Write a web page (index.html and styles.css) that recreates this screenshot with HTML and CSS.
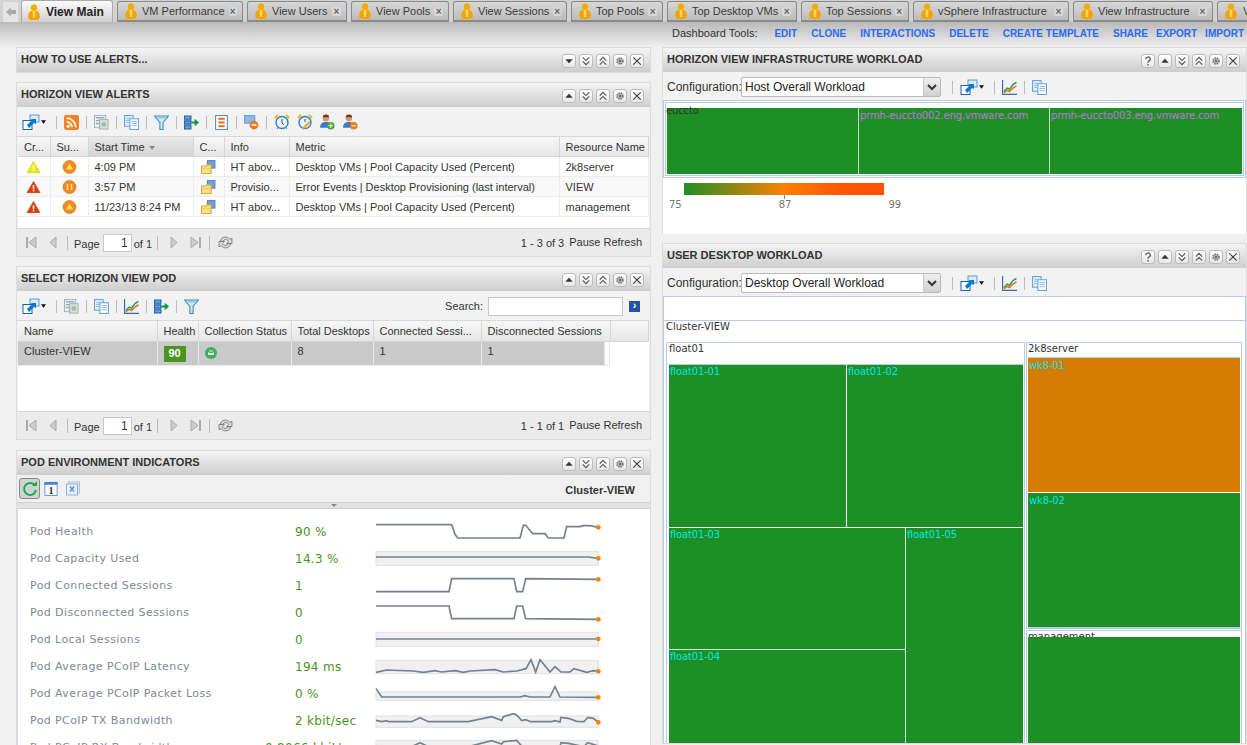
FILE: index.html
```html
<!DOCTYPE html>
<html lang="en">
<head>
    <meta charset="UTF-8">
    <title>View Main</title>
    <link rel="stylesheet" href="styles.css">
</head>
<body>

    <svg class="sprites" width="0" height="0">
        <defs>
            <symbol id="i-person" viewBox="0 0 12 16">
                <circle cx="6" cy="3.800" r="3.300" fill="#f5ad00"/>
                <path d="M6 0l1 1.500H5z" fill="#f5ad00"/>
                <path d="M.5 14.500c-1-4 1-7.500 3-7.500h5c2 0 4 3.500 3 7.500l-2 1.500H2.500z" fill="#f4a300"/>
                <path d="M4.500 7h3L7 14H5z" fill="#ffd766"/>
            </symbol>
            <symbol id="i-launch" viewBox="0 0 18 16">
                <rect x="8" y="1" width="9" height="7" fill="#dbe9f8" stroke="#5b9bd5"/>
                <rect x="1" y="6.500" width="9" height="9" fill="#fff" stroke="#1c5fa8"/>
                <path d="M5 11l5-5-2-1h6v5l-2-1-5 5z" fill="#0a78d8"/>
            </symbol>
            <symbol id="i-caret" viewBox="0 0 6 4"><path d="M0 0h6L3 4z" fill="#111"/></symbol>
            <symbol id="i-rss" viewBox="0 0 14 14">
                <rect width="14" height="14" rx="2" fill="#f58220"/>
                <circle cx="4" cy="10.500" r="1.500" fill="#fff"/>
                <path d="M2.500 6.500a5 5 0 0 1 5 5M2.500 3a8.500 8.500 0 0 1 8.500 8.500" fill="none" stroke="#fff" stroke-width="1.600"/>
            </symbol>
            <symbol id="i-config" viewBox="0 0 16 16">
                <rect x=".5" y=".5" width="12" height="13" fill="#eef3f8" stroke="#8fb4d8"/>
                <path d="M2 3h9M2 6h4M2 9h4" stroke="#9aa" stroke-width="1.500"/>
                <rect x="6" y="5" width="9" height="10" fill="#ddd" stroke="#aaa"/>
                <circle cx="10.500" cy="10" r="2.500" fill="#8fc79a"/>
            </symbol>
            <symbol id="i-copy" viewBox="0 0 14 14">
                <rect x=".5" y=".5" width="8" height="10" fill="#e6f0fb" stroke="#6aa3e0"/>
                <rect x="5.500" y="3.500" width="8" height="10" fill="#fff" stroke="#6aa3e0"/>
                <path d="M7 6h5M7 8h5M7 10h5M2 3h5M2 5h3M2 7h3" stroke="#8fbbe8"/>
            </symbol>
            <symbol id="i-filter" viewBox="0 0 14 14">
                <path d="M.5 1h13L8.500 7v6.500h-3V7z" fill="#cfe6f7" stroke="#3c8fc0"/>
                <path d="M3 2.500h8" stroke="#7fbfe0"/>
            </symbol>
            <symbol id="i-export" viewBox="0 0 14 14">
                <path d="M.5 1h6v3h-6zM.5 5.500h6v3h-6zM.5 10h6v3h-6z" fill="#6aa3e0" stroke="#1c5fa8"/>
                <path d="M7 6h3V3.500L14 7l-4 3.500V8H7z" fill="#0a9a3c"/>
            </symbol>
            <symbol id="i-list" viewBox="0 0 12 14">
                <rect x=".5" y=".5" width="11" height="13" fill="#fff" stroke="#4a8ed0"/>
                <path d="M3 3.500h6M3 7h6M3 10.500h6" stroke="#f26a1b" stroke-width="1.800"/>
            </symbol>
            <symbol id="i-minus" viewBox="0 0 12 12">
                <rect x=".5" y=".5" width="8" height="6" fill="#8fb8e8" stroke="#6aa3e0"/>
                <circle cx="8" cy="8" r="3.500" fill="#f07a1a"/>
                <path d="M6 8h4" stroke="#fff" stroke-width="1.200"/>
            </symbol>
            <symbol id="i-alarm" viewBox="0 0 16 16">
                <path d="M1 4l3-3M15 4l-3-3" stroke="#f2b400" stroke-width="2"/>
                <circle cx="8" cy="8.500" r="6" fill="#eaf4fc" stroke="#2f80c8" stroke-width="1.400"/>
                <path d="M8 5v4l2 2" fill="none" stroke="#444"/>
                <path d="M3 15l1.500-2M13 15l-1.500-2" stroke="#777"/>
            </symbol>
            <symbol id="i-alarm-edit" viewBox="0 0 16 16">
                <path d="M1 4l3-3M15 4l-3-3" stroke="#f2b400" stroke-width="2"/>
                <circle cx="8" cy="8.500" r="6" fill="#eaf4fc" stroke="#2f80c8" stroke-width="1.400"/>
                <path d="M8 5v3" stroke="#444"/>
                <path d="M5 14l7-7 1.500 1.500-7 7H5z" fill="#f2a030"/>
            </symbol>
            <symbol id="i-user-add" viewBox="0 0 15 15">
                <circle cx="6.500" cy="4" r="3" fill="#d49a6a"/>
                <path d="M3.500 3a3 2.500 0 0 1 6 0z" fill="#6b3d1c"/>
                <path d="M1 13c0-4 2-5.500 5.500-5.500S11 9 11 13z" fill="#3f78c8"/>
                <circle cx="11" cy="11" r="3.500" fill="#46a83c"/>
                <path d="M9 11h4M11 9v4" stroke="#fff"/>
            </symbol>
            <symbol id="i-user-del" viewBox="0 0 15 15">
                <circle cx="6.500" cy="4" r="3" fill="#d49a6a"/>
                <path d="M3.500 3a3 2.500 0 0 1 6 0z" fill="#6b3d1c"/>
                <path d="M1 13c0-4 2-5.500 5.500-5.500S11 9 11 13z" fill="#3f78c8"/>
                <circle cx="11" cy="11" r="3.500" fill="#f07a1a"/>
                <path d="M9 11h4" stroke="#fff"/>
            </symbol>
            <symbol id="i-chart" viewBox="0 0 13 13">
                <path d="M.5 0v12.500H13" fill="none" stroke="#2f6fb0"/>
                <path d="M1.500 10l3-3 2 1 3-4 3-2" fill="none" stroke="#2aa04a" stroke-width="1.300"/>
                <path d="M1.500 11l3-2 2 1 3-3 3-2" fill="none" stroke="#f26a1b" stroke-width="1.300"/>
            </symbol>
            <symbol id="i-warn-y" viewBox="0 0 16 14">
                <path d="M8 1l7 12H1z" fill="#eaea10" stroke="#c8c800" stroke-width=".6"/>
                <path d="M8 5v4M8 10v1.600" stroke="#fff" stroke-width="1.600"/>
            </symbol>
            <symbol id="i-warn-r" viewBox="0 0 16 14">
                <path d="M8 1l7 12H1z" fill="#d9400e" stroke="#c03500" stroke-width=".6"/>
                <path d="M8 5v4M8 10v1.600" stroke="#fff" stroke-width="1.600"/>
            </symbol>
            <symbol id="i-badge" viewBox="0 0 14 14">
                <circle cx="7" cy="7" r="6.500" fill="#f08a1e" stroke="#c96a10" stroke-width=".6"/>
                <path d="M7 3.500l3.500 6h-7z" fill="#ffe25c"/>
            </symbol>
            <symbol id="i-badge-n" viewBox="0 0 14 14">
                <circle cx="7" cy="7" r="6.500" fill="#f08a1e" stroke="#c96a10" stroke-width=".6"/>
                <path d="M5 4v6M9 4v6" stroke="#ffe0b0" stroke-width="1.400"/>
            </symbol>
            <symbol id="i-folder" viewBox="0 0 14 13">
                <rect x="6" y=".5" width="7" height="7" fill="#6f9fe0" stroke="#5a88c8"/>
                <path d="M.5 5.500h4l1-1h4v8h-9z" fill="#fbe08a" stroke="#d8a838"/>
                <path d="M1 8h8" stroke="#f5c850"/>
            </symbol>
            <symbol id="i-first" viewBox="0 0 11 13"><path d="M1 1v11" stroke="#aaa" stroke-width="2"/><path d="M10 1v11L3 6.500z" fill="#ccc" stroke="#aaa"/></symbol>
            <symbol id="i-prev" viewBox="0 0 8 13"><path d="M7 1v11L1 6.500z" fill="#ccc" stroke="#aaa"/></symbol>
            <symbol id="i-next" viewBox="0 0 8 13"><path d="M1 1v11l6-5.500z" fill="#ccc" stroke="#aaa"/></symbol>
            <symbol id="i-last" viewBox="0 0 11 13"><path d="M10 1v11" stroke="#aaa" stroke-width="2"/><path d="M1 1v11l7-5.500z" fill="#ccc" stroke="#aaa"/></symbol>
            <symbol id="i-reload" viewBox="0 0 14 14">
                <path d="M2 6a5 5 0 0 1 9-2l2-1v5H8l2-2a3 3 0 0 0-5.500 0zM12 8a5 5 0 0 1-9 2l-2 1V6h5L4 8a3 3 0 0 0 5.500 0z" fill="#ddd" stroke="#777" stroke-width=".8"/>
            </symbol>
            <symbol id="b-down" viewBox="0 0 13 13"><path d="M2.500 4.500h8L6.500 9z" fill="#333"/></symbol>
            <symbol id="b-up" viewBox="0 0 13 13"><path d="M2.500 8.500h8L6.500 4z" fill="#333"/></symbol>
            <symbol id="b-dbl-down" viewBox="0 0 13 13"><path d="M3 2.500l3.500 3.500L10 2.500M3 7l3.500 3.500L10 7" fill="none" stroke="#555" stroke-width="1.200"/></symbol>
            <symbol id="b-dbl-up" viewBox="0 0 13 13"><path d="M3 6l3.500-3.500L10 6M3 10.500L6.500 7l3.500 3.500" fill="none" stroke="#555" stroke-width="1.200"/></symbol>
            <symbol id="b-gear" viewBox="0 0 13 13"><circle cx="6.500" cy="6.500" r="3.200" fill="#bbb" stroke="#777" stroke-width="1.800" stroke-dasharray="1.600 1"/><circle cx="6.500" cy="6.500" r="1.300" fill="#666"/></symbol>
            <symbol id="b-close" viewBox="0 0 13 13"><path d="M2.500 2.500l8 8M10.500 2.500l-8 8" stroke="#333" stroke-width="1.100"/></symbol>
            <symbol id="b-help" viewBox="0 0 13 13"><path d="M4 4.500a2.500 2.200 0 1 1 3.500 2c-1 .5-1 1-1 2M6.500 9.800v1.700" fill="none" stroke="#666" stroke-width="1.600"/></symbol>
        </defs>
    </svg>

    <div class="tabbar">
        <div class="tab-back"><svg width="10" height="10" viewBox="0 0 10 10"><path d="M0 5l5-4.500V3h5v4H5v2.500z" fill="#aaa"/></svg></div>
        <div class="tab tab-active w92"><svg class="tab-icon"><use href="#i-person"/></svg><span>View Main</span></div>
        <div class="tab w126"><svg class="tab-icon"><use href="#i-person"/></svg><span>VM Performance</span><i class="tab-x">×</i></div>
        <div class="tab w100"><svg class="tab-icon"><use href="#i-person"/></svg><span>View Users</span><i class="tab-x">×</i></div>
        <div class="tab w98"><svg class="tab-icon"><use href="#i-person"/></svg><span>View Pools</span><i class="tab-x">×</i></div>
        <div class="tab w114"><svg class="tab-icon"><use href="#i-person"/></svg><span>View Sessions</span><i class="tab-x">×</i></div>
        <div class="tab w92"><svg class="tab-icon"><use href="#i-person"/></svg><span>Top Pools</span><i class="tab-x">×</i></div>
        <div class="tab w130"><svg class="tab-icon"><use href="#i-person"/></svg><span>Top Desktop VMs</span><i class="tab-x">×</i></div>
        <div class="tab w108"><svg class="tab-icon"><use href="#i-person"/></svg><span>Top Sessions</span><i class="tab-x">×</i></div>
        <div class="tab w156"><svg class="tab-icon"><use href="#i-person"/></svg><span>vSphere Infrastructure</span><i class="tab-x">×</i></div>
        <div class="tab w140"><svg class="tab-icon"><use href="#i-person"/></svg><span>View Infrastructure</span><i class="tab-x">×</i></div>
        <div class="tab w60"><svg class="tab-icon tab-icon-last"><use href="#i-person"/></svg><span>V</span></div>
    </div>

    <div class="dash-tools">
        <span class="dash-label">Dashboard Tools:</span>
        <a class="dash-link">EDIT</a>
        <a class="dash-link">CLONE</a>
        <a class="dash-link">INTERACTIONS</a>
        <a class="dash-link">DELETE</a>
        <a class="dash-link">CREATE TEMPLATE</a>
        <a class="dash-link">SHARE</a>
        <a class="dash-link tight">EXPORT</a>
        <a class="dash-link tight">IMPORT</a>
    </div>

    <div class="columns">

        <div class="col-left">

            <section class="panel">
                <header class="panel-head">
                    <h3>HOW TO USE ALERTS...</h3>
                    <div class="win-btns">
                        <svg class="win-btn"><use href="#b-down"/></svg>
                        <svg class="win-btn"><use href="#b-dbl-down"/></svg>
                        <svg class="win-btn"><use href="#b-dbl-up"/></svg>
                        <svg class="win-btn"><use href="#b-gear"/></svg>
                        <svg class="win-btn"><use href="#b-close"/></svg>
                    </div>
                </header>
            </section>

            <section class="panel alerts">
                <header class="panel-head">
                    <h3>HORIZON VIEW ALERTS</h3>
                    <div class="win-btns">
                        <svg class="win-btn"><use href="#b-up"/></svg>
                        <svg class="win-btn"><use href="#b-dbl-down"/></svg>
                        <svg class="win-btn"><use href="#b-dbl-up"/></svg>
                        <svg class="win-btn"><use href="#b-gear"/></svg>
                        <svg class="win-btn"><use href="#b-close"/></svg>
                    </div>
                </header>
                <div class="toolbar">
                    <svg class="ic-launch"><use href="#i-launch"/></svg><svg class="ic-caret"><use href="#i-caret"/></svg>
                    <b class="sep"></b>
                    <svg class="ic"><use href="#i-rss"/></svg>
                    <b class="sep"></b>
                    <svg class="ic"><use href="#i-config"/></svg>
                    <b class="sep"></b>
                    <svg class="ic"><use href="#i-copy"/></svg>
                    <b class="sep"></b>
                    <svg class="ic"><use href="#i-filter"/></svg>
                    <b class="sep"></b>
                    <svg class="ic"><use href="#i-export"/></svg>
                    <b class="sep"></b>
                    <svg class="ic"><use href="#i-list"/></svg>
                    <b class="sep"></b>
                    <svg class="ic"><use href="#i-minus"/></svg>
                    <b class="sep"></b>
                    <svg class="ic ic-wide"><use href="#i-alarm"/></svg>
                    <svg class="ic ic-wide"><use href="#i-alarm-edit"/></svg>
                    <svg class="ic ic-wide"><use href="#i-user-add"/></svg>
                    <svg class="ic ic-wide"><use href="#i-user-del"/></svg>
                </div>
                <table class="grid grid-alerts">
                    <colgroup><col class="c32"><col class="c38"><col class="c105"><col class="c31"><col class="c65"><col class="c270"><col></colgroup>
                    <thead>
                        <tr><th>Cr...</th><th>Su...</th><th class="sorted">Start Time <em class="sort-mark"></em></th><th>C...</th><th>Info</th><th>Metric</th><th>Resource Name</th></tr>
                    </thead>
                    <tbody>
                        <tr>
                            <td class="ctr"><svg class="cell-ic"><use href="#i-warn-y"/></svg></td>
                            <td class="ctr"><svg class="cell-ic"><use href="#i-badge"/></svg></td>
                            <td>4:09 PM</td>
                            <td class="ctr"><svg class="cell-ic"><use href="#i-folder"/></svg></td>
                            <td>HT abov...</td>
                            <td>Desktop VMs | Pool Capacity Used (Percent)</td>
                            <td>2k8server</td>
                        </tr>
                        <tr>
                            <td class="ctr"><svg class="cell-ic"><use href="#i-warn-r"/></svg></td>
                            <td class="ctr"><svg class="cell-ic"><use href="#i-badge-n"/></svg></td>
                            <td>3:57 PM</td>
                            <td class="ctr"><svg class="cell-ic"><use href="#i-folder"/></svg></td>
                            <td>Provisio...</td>
                            <td>Error Events | Desktop Provisioning (last interval)</td>
                            <td>VIEW</td>
                        </tr>
                        <tr>
                            <td class="ctr"><svg class="cell-ic"><use href="#i-warn-r"/></svg></td>
                            <td class="ctr"><svg class="cell-ic"><use href="#i-badge"/></svg></td>
                            <td>11/23/13 8:24 PM</td>
                            <td class="ctr"><svg class="cell-ic"><use href="#i-folder"/></svg></td>
                            <td>HT abov...</td>
                            <td>Desktop VMs | Pool Capacity Used (Percent)</td>
                            <td>management</td>
                        </tr>
                    </tbody>
                </table>
                <div class="grid-fill fill-alerts"></div>
                <div class="pager">
                    <svg class="pg-first"><use href="#i-first"/></svg>
                    <svg class="pg-prev"><use href="#i-prev"/></svg>
                    <b class="sep"></b>
                    <span>Page</span><span class="pg-input">1</span><span>of 1</span>
                    <b class="sep"></b>
                    <svg class="pg-next"><use href="#i-next"/></svg>
                    <svg class="pg-last"><use href="#i-last"/></svg>
                    <b class="sep"></b>
                    <svg class="pg-reload"><use href="#i-reload"/></svg>
                    <span class="pg-count">1 - 3 of 3</span>
                    <span class="pg-pause">Pause Refresh</span>
                </div>
            </section>

            <section class="panel pods">
                <header class="panel-head">
                    <h3>SELECT HORIZON VIEW POD</h3>
                    <div class="win-btns">
                        <svg class="win-btn"><use href="#b-up"/></svg>
                        <svg class="win-btn"><use href="#b-dbl-down"/></svg>
                        <svg class="win-btn"><use href="#b-dbl-up"/></svg>
                        <svg class="win-btn"><use href="#b-gear"/></svg>
                        <svg class="win-btn"><use href="#b-close"/></svg>
                    </div>
                </header>
                <div class="toolbar">
                    <svg class="ic-launch"><use href="#i-launch"/></svg><svg class="ic-caret"><use href="#i-caret"/></svg>
                    <b class="sep"></b>
                    <svg class="ic"><use href="#i-config"/></svg>
                    <b class="sep"></b>
                    <svg class="ic"><use href="#i-copy"/></svg>
                    <b class="sep"></b>
                    <svg class="ic"><use href="#i-chart"/></svg>
                    <b class="sep"></b>
                    <svg class="ic"><use href="#i-export"/></svg>
                    <b class="sep"></b>
                    <svg class="ic"><use href="#i-filter"/></svg>
                    <span class="search-label">Search:</span>
                    <span class="search-box"></span>
                    <span class="search-go">›</span>
                </div>
                <table class="grid grid-pods">
                    <colgroup><col class="c139"><col class="c41"><col class="c93"><col class="c82"><col class="c108"><col class="c129"><col></colgroup>
                    <thead>
                        <tr><th>Name</th><th>Health</th><th>Collection Status</th><th>Total Desktops</th><th>Connected Sessi...</th><th>Disconnected Sessions</th><th></th></tr>
                    </thead>
                    <tbody>
                        <tr class="selected">
                            <td>Cluster-VIEW</td>
                            <td><span class="health">90</span></td>
                            <td><svg class="status" viewBox="0 0 12 12"><circle cx="6" cy="6" r="6" fill="#3fae5a"/><path d="M3 8V5l1.500 1h3L9 5v3z" fill="#d8f5dc"/><path d="M5 5V3M7 5V3" stroke="#d8f5dc"/></svg></td>
                            <td>8</td>
                            <td>1</td>
                            <td class="sel-end">1</td>
                            <td class="no-sel"></td>
                        </tr>
                    </tbody>
                </table>
                <div class="grid-fill fill-pods"></div>
                <div class="pager">
                    <svg class="pg-first"><use href="#i-first"/></svg>
                    <svg class="pg-prev"><use href="#i-prev"/></svg>
                    <b class="sep"></b>
                    <span>Page</span><span class="pg-input">1</span><span>of 1</span>
                    <b class="sep"></b>
                    <svg class="pg-next"><use href="#i-next"/></svg>
                    <svg class="pg-last"><use href="#i-last"/></svg>
                    <b class="sep"></b>
                    <svg class="pg-reload"><use href="#i-reload"/></svg>
                    <span class="pg-count">1 - 1 of 1</span>
                    <span class="pg-pause">Pause Refresh</span>
                </div>
            </section>

            <section class="panel env">
                <header class="panel-head">
                    <h3>POD ENVIRONMENT INDICATORS</h3>
                    <div class="win-btns">
                        <svg class="win-btn"><use href="#b-up"/></svg>
                        <svg class="win-btn"><use href="#b-dbl-down"/></svg>
                        <svg class="win-btn"><use href="#b-dbl-up"/></svg>
                        <svg class="win-btn"><use href="#b-gear"/></svg>
                        <svg class="win-btn"><use href="#b-close"/></svg>
                    </div>
                </header>
                <div class="env-tools">
                    <span class="env-refresh"><svg width="16" height="16" viewBox="0 0 16 16"><path d="M13 4.500A6 6 0 1 0 14 9" fill="none" stroke="#10b050" stroke-width="2"/><path d="M10 5h5V0z" fill="#10b050"/></svg></span>
                    <svg class="env-ic" viewBox="0 0 14 16"><rect x=".5" y="2.500" width="13" height="13" fill="#fff" stroke="#5a9ad8"/><rect y="1" width="14" height="3" fill="#3f86d0"/><text x="7" y="13.500" text-anchor="middle" class="cal-num">1</text></svg>
                    <svg class="env-ic" viewBox="0 0 14 14"><rect x="2.500" y=".5" width="11" height="11" fill="#dce8f5" stroke="#a8c4e0"/><rect x=".5" y="2.500" width="11" height="11" fill="#e8f0fa" stroke="#8fb4d8"/><path d="M4 5l4 5M8 5l-4 5" stroke="#5a8fc8" stroke-width="1.400"/></svg>
                    <span class="env-title">Cluster-VIEW</span>
                </div>
                <div class="env-split"><span class="env-grip"></span></div>
                <div class="env-body">
                    <div class="spark-row">
                        <span class="spark-name">Pod Health</span><span class="spark-val">90 %</span>
                        <svg class="spark" viewBox="0 0 690 81"><polyline points="3,20 230,20 240,49 248,60 435,60 445,22 452,22 473,47 510,47 520,60 567,60 575,26 615,26 625,23 645,23 670,28"/><circle cx="670" cy="28" r="7"/></svg>
                    </div>
                    <div class="spark-row">
                        <span class="spark-name">Pod Capacity Used</span><span class="spark-val">14.3 %</span>
                        <svg class="spark" viewBox="0 0 690 81"><rect x="3" y="19" width="667" height="42"/><polyline points="3,36 640,36 670,40"/><circle cx="670" cy="40" r="7"/></svg>
                    </div>
                    <div class="spark-row">
                        <span class="spark-name">Pod Connected Sessions</span><span class="spark-val">1</span>
                        <svg class="spark" viewBox="0 0 690 81"><polyline points="3,59 222,59 230,20 417,20 425,59 443,59 452,20 670,22"/><circle cx="670" cy="22" r="7"/></svg>
                    </div>
                    <div class="spark-row">
                        <span class="spark-name">Pod Disconnected Sessions</span><span class="spark-val">0</span>
                        <svg class="spark" viewBox="0 0 690 81"><polyline points="3,21 222,21 230,59 417,59 425,21 443,21 452,59 670,61"/><circle cx="670" cy="61" r="7"/></svg>
                    </div>
                    <div class="spark-row">
                        <span class="spark-name">Pod Local Sessions</span><span class="spark-val">0</span>
                        <svg class="spark" viewBox="0 0 690 81"><rect x="3" y="19" width="667" height="42"/><polyline points="3,39 670,39"/><circle cx="670" cy="39" r="7"/></svg>
                    </div>
                    <div class="spark-row">
                        <span class="spark-name">Pod Average PCoIP Latency</span><span class="spark-val">194 ms</span>
                        <svg class="spark" viewBox="0 0 690 81"><rect x="3" y="22" width="667" height="40"/><polyline points="3,58 35,51 115,54 145,58 180,53 200,57 240,53 265,58 285,54 360,50 385,57 425,54 453,47 468,20 482,57 495,20 525,57 540,41 558,57 585,57 597,47 635,58 655,53 670,55"/><circle cx="670" cy="55" r="7"/></svg>
                    </div>
                    <div class="spark-row">
                        <span class="spark-name">Pod Average PCoIP Packet Loss</span><span class="spark-val">0 %</span>
                        <svg class="spark" viewBox="0 0 690 81"><rect x="3" y="36" width="667" height="25"/><polyline points="3,25 20,51 435,51 450,47 465,51 525,51 540,20 555,51 670,52"/><circle cx="670" cy="52" r="7"/></svg>
                    </div>
                    <div class="spark-row">
                        <span class="spark-name">Pod PCoIP TX Bandwidth</span><span class="spark-val">2 kbit/sec</span>
                        <svg class="spark" viewBox="0 0 690 81"><rect x="3" y="27" width="667" height="34"/><polyline points="3,40 20,44 35,41 40,44 110,44 135,32 160,44 280,44 350,29 380,40 385,29 415,20 425,24 440,41 452,38 467,44 530,44 540,41 555,45 558,31 580,34 605,43 627,44 638,31 655,34 670,46"/><circle cx="670" cy="46" r="7"/></svg>
                    </div>
                    <div class="spark-row">
                        <span class="spark-name">Pod PCoIP RX Bandwidth</span><span class="spark-val val-long">0.8066 kbit/sec</span>
                        <svg class="spark" viewBox="0 0 690 81"><rect x="3" y="19" width="667" height="40"/><polyline points="3,40 110,38 135,26 160,38 280,38 350,20 380,30 385,23 425,19 440,36 467,38 555,38 558,26 580,28 627,38 638,26 670,36"/></svg>
                    </div>
                </div>
            </section>

        </div>

        <div class="col-right">

            <section class="panel infra">
                <header class="panel-head">
                    <h3>HORIZON VIEW INFRASTRUCTURE WORKLOAD</h3>
                    <div class="win-btns">
                        <svg class="win-btn"><use href="#b-help"/></svg>
                        <svg class="win-btn"><use href="#b-up"/></svg>
                        <svg class="win-btn"><use href="#b-dbl-down"/></svg>
                        <svg class="win-btn"><use href="#b-dbl-up"/></svg>
                        <svg class="win-btn"><use href="#b-gear"/></svg>
                        <svg class="win-btn"><use href="#b-close"/></svg>
                    </div>
                </header>
                <div class="config-bar">
                    <span class="config-label">Configuration:</span>
                    <span class="combo"><span class="combo-text">Host Overall Workload</span><span class="combo-arrow"><svg width="10" height="7" viewBox="0 0 10 7"><path d="M1 1l4 4 4-4" fill="none" stroke="#333" stroke-width="2"/></svg></span></span>
                    <b class="sep first"></b>
                    <svg class="ic-launch"><use href="#i-launch"/></svg><svg class="ic-caret"><use href="#i-caret"/></svg>
                    <b class="sep"></b>
                    <svg class="ic"><use href="#i-chart"/></svg>
                    <b class="sep"></b>
                    <svg class="ic"><use href="#i-copy"/></svg>
                </div>
                <div class="host-map">
                    <div class="host-inner">
                        <div class="host-cell cell-a"><span class="host-root">euccto</span></div>
                        <div class="host-cell cell-b">prmh-euccto002.eng.vmware.com</div>
                        <div class="host-cell cell-c">prmh-euccto003.eng.vmware.com</div>
                    </div>
                </div>
                <div class="legend">
                    <div class="legend-bar"></div>
                    <div class="legend-tick"></div>
                    <div class="legend-nums"><span>75</span><span>87</span><span>99</span></div>
                </div>
            </section>

            <section class="panel desktops">
                <header class="panel-head">
                    <h3>USER DESKTOP WORKLOAD</h3>
                    <div class="win-btns">
                        <svg class="win-btn"><use href="#b-help"/></svg>
                        <svg class="win-btn"><use href="#b-up"/></svg>
                        <svg class="win-btn"><use href="#b-dbl-down"/></svg>
                        <svg class="win-btn"><use href="#b-dbl-up"/></svg>
                        <svg class="win-btn"><use href="#b-gear"/></svg>
                        <svg class="win-btn"><use href="#b-close"/></svg>
                    </div>
                </header>
                <div class="config-bar">
                    <span class="config-label">Configuration:</span>
                    <span class="combo"><span class="combo-text">Desktop Overall Workload</span><span class="combo-arrow"><svg width="10" height="7" viewBox="0 0 10 7"><path d="M1 1l4 4 4-4" fill="none" stroke="#333" stroke-width="2"/></svg></span></span>
                    <b class="sep first"></b>
                    <svg class="ic-launch"><use href="#i-launch"/></svg><svg class="ic-caret"><use href="#i-caret"/></svg>
                    <b class="sep"></b>
                    <svg class="ic"><use href="#i-chart"/></svg>
                    <b class="sep"></b>
                    <svg class="ic"><use href="#i-copy"/></svg>
                </div>
                <div class="tree">
                    <div class="tree-top"></div>
                    <div class="cluster">
                        <div class="node-label cluster-label">Cluster-VIEW</div>
                        <div class="cluster-kids">
                            <div class="group group-float">
                                <div class="node-label group-label">float01</div>
                                <div class="float-top">
                                    <div class="leaf leaf-w178">float01-01</div>
                                    <div class="leaf leaf-grow">float01-02</div>
                                </div>
                                <div class="float-bottom">
                                    <div class="float-stack">
                                        <div class="leaf leaf-h122">float01-03</div>
                                        <div class="leaf leaf-grow">float01-04</div>
                                    </div>
                                    <div class="leaf leaf-grow">float01-05</div>
                                </div>
                            </div>
                            <div class="group-side">
                                <div class="group group-server">
                                    <div class="node-label server-label">2k8server</div>
                                    <div class="leaf leaf-orange">wk8-01</div>
                                    <div class="leaf leaf-h136">wk8-02</div>
                                </div>
                                <div class="group group-mgmt">
                                    <div class="node-label mgmt-label">management</div>
                                    <div class="leaf leaf-grow"></div>
                                </div>
                            </div>
                        </div>
                    </div>
                </div>
            </section>

        </div>

    </div>

</body>
</html>
```

FILE: styles.css
```css
/* Global Styles */
html, body {
    height: 745px;
    overflow: hidden;
}

body {
    margin: 0;
    background: #f0f0f0;
    font-family: 'Liberation Sans', Arial, sans-serif;
    font-size: 11px;
    color: #333;
}

.sprites {
    position: absolute;
}

/* Tabs */
.tabbar {
    display: flex;
    align-items: flex-end;
    height: 22px;
    gap: 4px;
    padding-left: 3px;
    background: #d2d2d2;
    box-sizing: border-box;
    overflow: hidden;
    white-space: nowrap;
}

.tab-back {
    width: 15px;
    height: 20px;
    margin-right: -1px;
    background: #e4e4e4;
    display: flex;
    align-items: center;
    justify-content: center;
    flex-shrink: 0;
}

.tab {
    height: 21px;
    box-sizing: border-box;
    border: 1px solid #8a8a8a;
    border-bottom: 2px solid #8a8a8a;
    border-radius: 3px 3px 0 0;
    background: linear-gradient(to bottom, #d6d6d6, #bdbdbd);
    display: flex;
    align-items: center;
    font-size: 11px;
    color: #3a3a3a;
    padding-left: 7px;
    flex-shrink: 0;
}

.tab-active {
    height: 22px;
    padding-left: 6px;
    background: linear-gradient(to bottom, #fbfbfb, #cfcfcf);
    border-color: #aaa;
    border-bottom: 0;
    font-size: 12px;
    font-weight: bold;
    color: #222;
}

.tab-icon {
    width: 12px;
    height: 16px;
    margin-right: 5px;
    flex-shrink: 0;
}

.tab-active .tab-icon {
    margin-right: 6px;
}

.tab-icon-last {
    margin-right: 6px;
}

.tab span {
    flex: 1;
}

.tab-x {
    width: 9px;
    height: 9px;
    margin: 0 5px 0 4px;
    background: #d8d8d8;
    border-radius: 2px;
    color: #666;
    font-style: normal;
    font-weight: bold;
    font-size: 10px;
    line-height: 9px;
    text-align: center;
}

.w60 { width: 60px; }
.w92 { width: 92px; }
.w98 { width: 98px; }
.w100 { width: 100px; }
.w108 { width: 108px; }
.w114 { width: 114px; }
.w126 { width: 126px; }
.w130 { width: 130px; }
.w140 { width: 140px; }
.w156 { width: 156px; }

/* Dashboard tools */
.dash-tools {
    height: 25px;
    box-sizing: border-box;
    padding: 5px 3px 0 0;
    display: flex;
    justify-content: flex-end;
    gap: 14px;
    background: linear-gradient(to bottom, #b9b9b9, #f0f0f0);
    line-height: 13px;
}

.dash-label {
    color: #333;
    margin-right: 3px;
}

.dash-link {
    color: #2a6cf5;
    font-size: 10px;
    font-weight: bold;
}

.dash-link.tight {
    margin-left: -6px;
}

/* Columns */
.columns {
    display: flex;
    gap: 11px;
    padding-left: 16px;
}

.col-left {
    width: 635px;
    flex-shrink: 0;
}

.col-right {
    width: 585px;
    flex-shrink: 0;
}

.panel {
    border: 1px solid #dcdcdc;
    box-sizing: border-box;
    margin-bottom: 9px;
}

.pods {
    margin-bottom: 10px;
}

.panel-head {
    height: 24px;
    box-sizing: border-box;
    padding: 0 6px 0 4px;
    display: flex;
    align-items: center;
    justify-content: space-between;
    background: linear-gradient(to bottom, #f4f4f4, #cdcdcd);
}

.panel-head h3 {
    margin: 0 0 3px;
    font-size: 11px;
    font-weight: bold;
    color: #333;
}

.win-btns {
    display: flex;
    gap: 3px;
    margin-top: 2px;
}

.win-btn {
    width: 14px;
    height: 14px;
    box-sizing: border-box;
    padding: 0;
    background: linear-gradient(to bottom, #fff, #e6e6e6);
    border: 1px solid #bcbcbc;
    border-radius: 3px;
}

/* Toolbars */
.toolbar {
    height: 30px;
    display: flex;
    align-items: center;
    padding: 1px 0 0 5px;
    background: #f2f2f2;
    border-bottom: 1px solid #d8d8d8;
    box-sizing: border-box;
}

.ic {
    width: 15px;
    height: 15px;
    flex-shrink: 0;
}

.ic-launch {
    width: 18px;
    height: 16px;
    flex-shrink: 0;
}

.ic-caret {
    width: 5px;
    height: 4px;
    margin: 0 3px 0 1px;
    flex-shrink: 0;
}

.ic-wide {
    width: 16px;
    height: 16px;
    margin-right: 6.500px;
}

.sep {
    display: block;
    width: 1px;
    height: 13px;
    margin: 0 7px;
    background: #bbb;
    flex-shrink: 0;
}

.search-label {
    margin-left: auto;
    margin-right: 5px;
    font-size: 11px;
}

.search-box {
    width: 133px;
    height: 17px;
    background: #fff;
    border: 1px solid #c8c8c8;
}

.search-go {
    width: 11px;
    height: 11px;
    margin: 0 10px 0 6px;
    background: #2a4fa8;
    color: #fff;
    font-weight: bold;
    font-size: 11px;
    line-height: 9px;
    text-align: center;
}

/* Grids */
.grid {
    width: 631px;
    margin-left: 1px;
    border-collapse: collapse;
    table-layout: fixed;
    background: #fff;
}

.grid th {
    height: 20px;
    padding: 0 0 0 6px;
    text-align: left;
    font-weight: normal;
    font-size: 11px;
    color: #333;
    background: linear-gradient(to bottom, #f6f6f6, #e6e6e6);
    border-right: 1px solid #d6d6d6;
    border-bottom: 1px solid #d6d6d6;
    white-space: nowrap;
    overflow: hidden;
}

.grid-alerts th {
    height: 19px;
}

.grid th.sorted {
    background: linear-gradient(to bottom, #e8e8e8, #d4d4d4);
}

.sort-mark {
    display: inline-block;
    width: 0;
    height: 0;
    margin-left: 1px;
    vertical-align: middle;
    border: 3px solid transparent;
    border-top: 4px solid #888;
    border-bottom: 0;
}

.grid td {
    padding: 0 0 0 6px;
    font-size: 11px;
    white-space: nowrap;
    overflow: hidden;
    border-right: 1px solid #ececec;
    border-bottom: 1px solid #ececec;
}

.grid-alerts td {
    height: 19px;
}

.grid-alerts tbody tr:nth-child(2) td {
    background: #f8f8f8;
}

.grid td.ctr {
    padding: 0;
    text-align: center;
}

.cell-ic {
    display: block;
    width: 15px;
    height: 14px;
    margin: 0 auto;
}

.c31 { width: 31px; }
.c32 { width: 32px; }
.c38 { width: 38px; }
.c41 { width: 41px; }
.c65 { width: 65px; }
.c82 { width: 82px; }
.c93 { width: 93px; }
.c105 { width: 105px; }
.c108 { width: 108px; }
.c129 { width: 129px; }
.c139 { width: 139px; }
.c270 { width: 270px; }

.grid-pods td {
    height: 20px;
    padding-top: 3px;
    vertical-align: top;
}

.grid-pods .selected td {
    background: #c9c9c9;
    border-right-color: #e8e8e8;
}

/* the selection stops 5px short of the column edge */
.grid-pods .selected td.sel-end {
    background: linear-gradient(to right, #c9c9c9 123px, #fff 123px);
    border-right: 0;
}

.grid-pods .selected td.no-sel {
    background: #fff;
    border: 0;
}

.health {
    display: block;
    width: 22px;
    height: 16px;
    margin-top: 1px;
    background: #4a9420;
    color: #fff;
    font-weight: bold;
    line-height: 15px;
    text-align: center;
}

.status {
    display: block;
    width: 12px;
    height: 12px;
    margin-top: 2px;
}

.grid-fill {
    background: #fff;
    margin: 0 1px;
}

.fill-alerts {
    height: 11px;
}

.fill-pods {
    height: 45px;
}

/* Pager */
.pager {
    height: 28px;
    box-sizing: border-box;
    display: flex;
    align-items: center;
    padding: 0 8px 0 9px;
    background: #ebebeb;
    border-top: 1px solid #d6d6d6;
    font-size: 11px;
}

.pager .sep {
    height: 14px;
    margin: 0;
}

.pg-first, .pg-last {
    width: 11px;
    height: 13px;
}

.pg-prev, .pg-next {
    width: 8px;
    height: 13px;
}

.pg-prev { margin: 0 10px 0 12px; }
.pg-next { margin: 0 12px 0 12px; }
.pg-last { margin-right: 8px; }

.pager span:first-of-type {
    margin-left: 6px;
    padding-top: 2px;
}

.pager .sep + span {
    margin-left: 6px;
}

.pg-input {
    width: 29px;
    height: 18px;
    margin: 0 2px 0 3px;
    padding-right: 3px;
    box-sizing: border-box;
    background: #fff;
    border: 1px solid #c8c8c8;
    text-align: right;
    line-height: 17px;
    font-size: 12px;
}

.pg-input + span {
    padding-top: 2px;
    margin-right: 5px;
}

.pg-reload {
    width: 15px;
    height: 15px;
    margin-left: 8px;
}

.pg-count {
    margin-left: auto;
    padding-top: 1px;
    margin-right: 5px;
}

.pg-pause {
    padding-bottom: 2px;
}

/* Pod environment */
.env {
    height: 320px;
    margin-bottom: 0;
    background: #fff;
}

.env-tools {
    height: 28px;
    display: flex;
    align-items: center;
    padding-left: 2px;
    background: #f0f0f0;
    border-bottom: 1px solid #d0d0d0;
    box-sizing: border-box;
}

.env-refresh {
    width: 21px;
    height: 21px;
    box-sizing: border-box;
    display: flex;
    align-items: center;
    justify-content: center;
    background: #d2d2d2;
    border: 1px solid #8a8a8a;
    border-radius: 3px;
    margin-right: 4px;
}

.env-ic {
    width: 14px;
    height: 15px;
    margin-right: 8px;
}

.cal-num {
    font-family: 'Liberation Serif', serif;
    font-size: 10px;
    font-weight: bold;
    fill: #222;
}

.env-title {
    margin-left: auto;
    margin-right: 15px;
    padding-top: 2px;
    font-weight: bold;
    color: #333;
}

.env-split {
    height: 6px;
    background: #e2e2e2;
    border-bottom: 1px solid #cfcfcf;
    box-sizing: border-box;
    display: flex;
    justify-content: center;
}

.env-grip {
    width: 0;
    height: 0;
    margin-top: 1px;
    border: 3px solid transparent;
    border-top: 3px solid #888;
    border-bottom: 0;
}

.env-body {
    padding: 9px 0 0 12px;
    background: #fff;
    border-left: 1px solid #d8d8d8;
}

.spark-row {
    height: 27px;
    display: flex;
    align-items: center;
    font-family: 'DejaVu Sans', Verdana, sans-serif;
    font-size: 11px;
}

.spark-name {
    width: 265px;
    color: #7d8a96;
    letter-spacing: .4px;
    flex-shrink: 0;
    white-space: nowrap;
}

.spark-val {
    width: 80px;
    color: #4a9420;
    font-size: 12px;
    letter-spacing: .3px;
    flex-shrink: 0;
    white-space: nowrap;
    overflow: hidden;
}

.val-long {
    margin-left: -30px;
    width: 110px;
}

.spark {
    width: 230px;
    height: 27px;
    flex-shrink: 0;
}

.spark rect {
    fill: #f0f0f0;
    stroke: #dde3ea;
    stroke-width: 3;
}

.spark polyline {
    fill: none;
    stroke: #74818f;
    stroke-width: 5;
}

.spark circle {
    fill: #ff7f00;
}

/* Right column */
.config-bar {
    height: 28px;
    box-sizing: border-box;
    display: flex;
    align-items: center;
    padding: 2px 0 0 4px;
    background: #f2f2f2;
    font-size: 12px;
}

.config-label {
    width: 74px;
    flex-shrink: 0;
}

.combo {
    width: 200px;
    height: 20px;
    box-sizing: border-box;
    display: flex;
    background: #fff;
    border: 1px solid #b8b8b8;
    border-radius: 2px;
    flex-shrink: 0;
}

.combo-text {
    flex: 1;
    padding-left: 3px;
    line-height: 18px;
    color: #222;
}

.combo-arrow {
    width: 16px;
    display: flex;
    align-items: center;
    justify-content: center;
    background: linear-gradient(to bottom, #eee, #d0d0d0);
    border-left: 1px solid #c8c8c8;
}

.config-bar .sep.first {
    margin-left: 11px;
}

.infra {
    height: 187px;
    margin-bottom: 9px;
    background: #fff;
    border-bottom: 0;
}

.host-map {
    border: 1px solid #b5cde4;
    padding: 1px;
    background: #fff;
}

.host-inner {
    border: 1px solid #b5cde4;
    padding: 5px 1px 1px 1px;
    display: flex;
    height: 74px;
    box-sizing: border-box;
    font-family: 'DejaVu Sans', Verdana, sans-serif;
    font-size: 10px;
}

.host-cell {
    box-sizing: border-box;
    background: #1e8f24;
    color: #c26fe0;
    padding: 2px 0 0 1px;
    line-height: 12px;
    letter-spacing: -.15px;
    white-space: nowrap;
    overflow: hidden;
}

.cell-a {
    width: 191px;
    overflow: visible;
}

.cell-b, .cell-c {
    border-left: 1px solid #c4dcc4;
}

.cell-b {
    width: 191px;
}

.cell-c {
    flex: 1;
}

.host-root {
    display: block;
    margin: -5px 0 0 -2px;
    color: #333;
}

.legend {
    padding: 5px 0 0 21px;
    font-family: 'DejaVu Sans', Verdana, sans-serif;
    font-size: 10px;
    color: #777;
}

.legend-bar {
    width: 200px;
    height: 12px;
    background: linear-gradient(to right, #1e8f24, #ff8000 50%, #ff5500 80%, #ff5000);
}

.legend-tick {
    width: 1px;
    height: 4px;
    margin-left: 100px;
    background: #888;
}

.legend-nums {
    display: flex;
    gap: 95px;
    margin-left: -15px;
}

.legend-nums span + span {
    margin-left: 2px;
}

.desktops {
    height: 501px;
    overflow: hidden;
    margin-bottom: 0;
    background: #fff;
}

.tree {
    border: 1px solid #b5cde4;
    border-bottom: 0;
    font-family: 'DejaVu Sans', Verdana, sans-serif;
    font-size: 10px;
    color: #333;
    height: 460px;
    overflow: hidden;
    box-sizing: border-box;
}

.tree-top {
    height: 23px;
}

.cluster {
    border-top: 1px solid #b5cde4;
}

.node-label {
    line-height: 12px;
    white-space: nowrap;
}

.cluster-label {
    height: 16px;
    padding: 0 0 5px 2px;
}

.cluster-kids {
    display: flex;
    gap: 1px;
    padding: 0 2px;
}

.group {
    border: 1px solid #b5cde4;
    background: #fff;
}

.group-float {
    width: 359px;
    height: 420px;
    box-sizing: border-box;
}

.group-label {
    height: 21px;
    padding-left: 2px;
}

.leaf {
    background: #1e8f24;
    color: #00e6e6;
    padding: 1px 0 0 1px;
    line-height: 12px;
    letter-spacing: -.15px;
    box-sizing: border-box;
}

.float-top {
    display: flex;
    height: 162px;
    margin: 0 1px 0 2px;
    gap: 1px;
    border-top: 1px solid #b5cde4;
}

.float-bottom {
    display: flex;
    gap: 1px;
    height: 240px;
    margin: 1px 1px 0 2px;
    background: #d8eedc;
}

.float-stack {
    width: 236px;
    display: flex;
    flex-direction: column;
    gap: 1px;
}

.leaf-w178 {
    width: 177px;
}

.leaf-grow {
    flex: 1;
}

.leaf-h122 {
    height: 121px;
}

.group-side {
    width: 216px;
    display: flex;
    flex-direction: column;
    gap: 1px;
}

.group-server {
    height: 287px;
    box-sizing: border-box;
    padding: 0 1px;
}

.server-label {
    height: 14px;
}

.leaf-orange {
    height: 135px;
    padding-top: 2px;
    background: #d67c00;
    border-top: 1px solid #b5cde4;
}

.leaf-h136 {
    height: 135px;
    margin-top: 1px;
    padding-top: 2px;
    border-bottom: 1px solid #b5cde4;
}

.group-mgmt {
    height: 130px;
    box-sizing: border-box;
    padding: 0 1px;
    display: flex;
    flex-direction: column;
}

.mgmt-label {
    height: 6px;
    overflow: visible;
}
```
